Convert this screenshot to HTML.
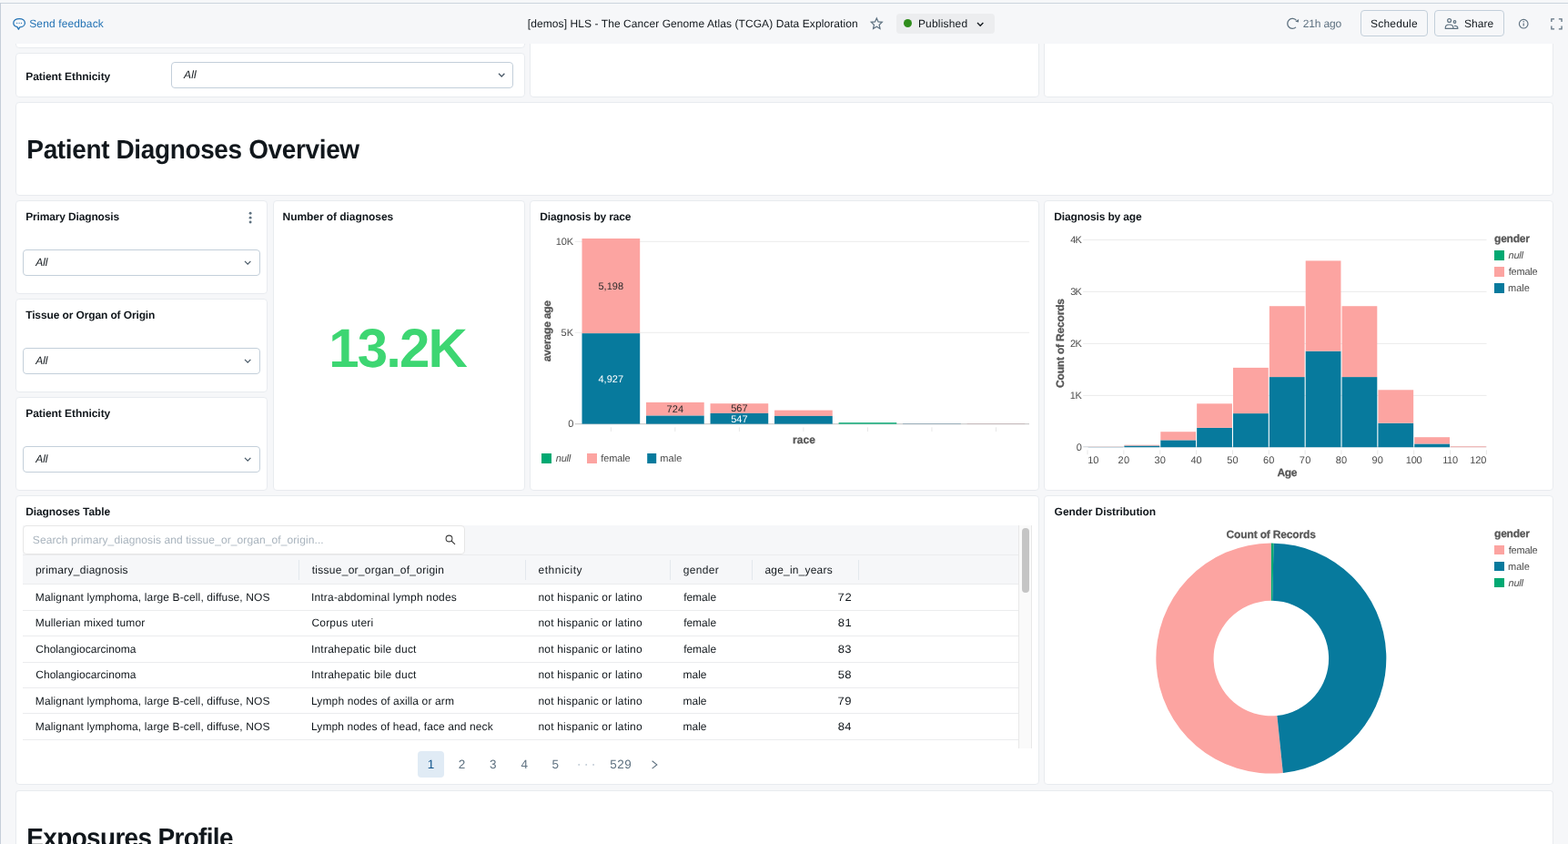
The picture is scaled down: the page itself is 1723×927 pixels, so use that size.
<!DOCTYPE html>
<html lang="en"><head><meta charset="utf-8"><title>[demos] HLS - The Cancer Genome Atlas (TCGA) Data Exploration</title>
<style>
*{box-sizing:border-box;margin:0;padding:0}
html,body{width:1723px;height:927px;overflow:hidden}
body{background:#f6f7f9;font-family:"Liberation Sans",sans-serif;color:#11171c;font-size:12px;position:relative;text-rendering:geometricPrecision}
#app{position:absolute;left:0;top:0;width:1723px;height:927px;overflow:hidden;will-change:transform}
.a{position:absolute}
.card{position:absolute;background:#fff;border:1px solid #e8ebef;border-radius:4px}
.t{position:absolute;white-space:pre;line-height:1}
.sel{position:absolute;background:#fff;border:1px solid #c3cfda;border-radius:4px}
.btn{position:absolute;border:1px solid #c3cfda;border-radius:4px;background:#f6f7f9}
.hl{position:absolute;height:1px;background:#ebecee}
svg{position:absolute;overflow:visible}
svg text{font-family:"Liberation Sans",sans-serif;white-space:pre}
</style></head>
<body>
<div id="app">
<div class="a" style="left:0;top:3px;width:1723px;height:1px;background:#ccd4dd"></div>
<div class="a" style="left:0;top:3px;width:1px;height:924px;background:#c5ced9"></div>
<div class="card" style="left:17px;top:30px;width:560px;height:23px;"></div>
<div class="card" style="left:582px;top:30px;width:560px;height:77px;"></div>
<div class="card" style="left:1147px;top:30px;width:560px;height:77px;"></div>
<div class="card" style="left:17px;top:58px;width:560px;height:49px;"></div>
<div class="card" style="left:17px;top:112px;width:1690px;height:103px;"></div>
<div class="card" style="left:17px;top:220px;width:277px;height:103px;"></div>
<div class="card" style="left:17px;top:328px;width:277px;height:103px;"></div>
<div class="card" style="left:17px;top:436px;width:277px;height:103px;"></div>
<div class="card" style="left:300px;top:220px;width:277px;height:319px;"></div>
<div class="card" style="left:582px;top:220px;width:560px;height:319px;"></div>
<div class="card" style="left:1147px;top:220px;width:560px;height:319px;"></div>
<div class="card" style="left:17px;top:544px;width:1125px;height:318px;"></div>
<div class="card" style="left:1147px;top:544px;width:560px;height:318px;"></div>
<div class="card" style="left:17px;top:868px;width:1690px;height:59px;border-bottom:0;border-radius:4px 4px 0 0"></div>
<div class="a" style="left:1px;top:4px;width:1722px;height:44px;background:#f6f7f9"></div>
<svg style="left:13px;top:19px" width="16" height="15" viewBox="0 0 16 15"><path d="M8.200 1.500C11.700 1.500 14.400 3.500 14.400 6.200C14.400 8.900 11.900 10.900 8.700 10.900L7.400 13.300L6 10.600C3.500 10 1.800 8.300 1.800 6.200C1.800 3.500 4.700 1.500 8.200 1.500Z" fill="none" stroke="#2272b4" stroke-width="1.250" stroke-linejoin="round"/><circle cx="5.700" cy="6.300" r=".65" fill="#2272b4"/><circle cx="8.100" cy="6.300" r=".65" fill="#2272b4"/><circle cx="10.500" cy="6.300" r=".65" fill="#2272b4"/></svg>
<div class="t" style="left:32.26px;top:20px;color:#2272b4;letter-spacing:0.12px;">Send feedback</div>
<div class="t" style="left:579.84px;top:20px;letter-spacing:0.08px;">[demos] HLS - The Cancer Genome Atlas (TCGA) Data Exploration</div>
<svg style="left:955px;top:18px" width="16" height="16" viewBox="0 0 16 16"><path d="M8.300 2l1.750 3.900 4.250.45-3.150 2.900.85 4.200L8.300 11.300l-3.700 2.150.85-4.200L2.300 6.350l4.250-.45z" fill="none" stroke="#5f7281" stroke-width="1.250" stroke-linejoin="miter"/></svg>
<div class="a" style="left:985px;top:15px;width:108px;height:22px;background:#ecedef;border-radius:4px"></div>
<div class="a" style="left:993px;top:21px;width:9px;height:9px;border-radius:50%;background:#2f8d1c"></div>
<div class="t" style="left:1008.92px;top:20px;letter-spacing:0.18px;">Published</div>
<svg style="left:0;top:0" width="1" height="1"><path d="M1074.00 24.95L1077.20 28.25L1080.40 24.95" fill="none" stroke="#11171c" stroke-width="1.3"/></svg>
<svg style="left:0;top:0" width="1" height="1"><path d="M1424.500 22.400A5.500 5.500 0 1 0 1424 29.900" fill="none" stroke="#5f7281" stroke-width="1.300"/><path d="M1427.100 20.900L1426.900 24.400L1423.300 23.700Z" fill="#5f7281"/></svg>
<div class="t" style="left:1431.8px;top:20px;color:#5f7281;letter-spacing:-0.18px;">21h ago</div>
<div class="btn" style="left:1495px;top:11px;width:74px;height:29px"></div>
<div class="t" style="left:1505.96px;top:20px;letter-spacing:0.23px;">Schedule</div>
<div class="btn" style="left:1576px;top:11px;width:77px;height:29px"></div>
<svg style="left:0;top:0" width="1" height="1"><g fill="none" stroke="#5f7281" stroke-width="1.200" stroke-linejoin="round"><circle cx="1592.600" cy="22.500" r="1.950"/><path d="M1588.300 31.400v-1.100c0-2.100 1.900-3.300 4.300-3.300s4.300 1.200 4.300 3.300v1.100z"/><circle cx="1598.500" cy="24" r="1.300"/><path d="M1598 28.500h1.300c1.500 0 2.500.8 2.500 2.100v.8h-4.900"/></g></svg>
<div class="t" style="left:1609.06px;top:20px;letter-spacing:0.04px;">Share</div>
<svg style="left:1667px;top:19px" width="14" height="14" viewBox="0 0 14 14"><circle cx="7.200" cy="7.200" r="4.800" fill="none" stroke="#5f7281" stroke-width="1.150"/><path d="M7.200 6.500v3.100" stroke="#5f7281" stroke-width="1.250"/><circle cx="7.200" cy="4.800" r=".75" fill="#5f7281"/></svg>
<svg style="left:0;top:0" width="1" height="1"><path d="M1704.85 24.00V20.80H1708.05M1712.85 20.80H1716.05V24.00M1716.05 28.60V31.80H1712.85M1708.05 31.80H1704.85V28.60" fill="none" stroke="#5f7281" stroke-width="1.300"/></svg>
<div class="t" style="left:28.2px;top:78px;font-weight:bold;letter-spacing:-0.06px;">Patient Ethnicity</div>
<div class="sel" style="left:188px;top:68px;width:376px;height:29px"></div>
<div class="t" style="left:202.09px;top:76.4px;font-style:italic;letter-spacing:0.1px;">All</div>
<svg style="left:0;top:0" width="1" height="1"><path d="M548.00 80.75L551.20 84.05L554.40 80.75" fill="none" stroke="#4a5a68" stroke-width="1.25"/></svg>
<div class="t" style="left:29.33px;top:151.1px;font-size:28px;font-weight:bold;letter-spacing:-0.37px;transform:scaleY(1.045);transform-origin:0 23px;">Patient Diagnoses Overview</div>
<div class="t" style="left:29.33px;top:907.1px;font-size:28px;font-weight:bold;letter-spacing:-0.68px;transform:scaleY(1.045);transform-origin:0 23px;">Exposures Profile</div>
<div class="t" style="left:28.2px;top:232.2px;font-weight:bold;letter-spacing:-0.15px;">Primary Diagnosis</div>
<div class="sel" style="left:25px;top:274px;width:261px;height:29px"></div>
<div class="t" style="left:39.19px;top:282px;font-style:italic;">All</div>
<svg style="left:0;top:0" width="1" height="1"><path d="M269.00 286.85L272.20 290.15L275.40 286.85" fill="none" stroke="#4a5a68" stroke-width="1.25"/></svg>
<div class="t" style="left:28.17px;top:340.2px;font-weight:bold;letter-spacing:-0.12px;">Tissue or Organ of Origin</div>
<div class="sel" style="left:25px;top:382px;width:261px;height:29px"></div>
<div class="t" style="left:39.19px;top:390px;font-style:italic;">All</div>
<svg style="left:0;top:0" width="1" height="1"><path d="M269.00 394.85L272.20 398.15L275.40 394.85" fill="none" stroke="#4a5a68" stroke-width="1.25"/></svg>
<div class="t" style="left:28.2px;top:448.2px;font-weight:bold;letter-spacing:-0.06px;">Patient Ethnicity</div>
<div class="sel" style="left:25px;top:490px;width:261px;height:29px"></div>
<div class="t" style="left:39.19px;top:498px;font-style:italic;">All</div>
<svg style="left:0;top:0" width="1" height="1"><path d="M269.00 502.85L272.20 506.15L275.40 502.85" fill="none" stroke="#4a5a68" stroke-width="1.25"/></svg>
<svg style="left:0;top:0" width="1" height="1"><g fill="#5f7281"><circle cx="275.100" cy="234.300" r="1.450"/><circle cx="275.100" cy="239.150" r="1.450"/><circle cx="275.100" cy="244" r="1.450"/></g></svg>
<div class="t" style="left:310.6px;top:232.2px;font-weight:bold;letter-spacing:-0.06px;">Number of diagnoses</div>
<div class="t" style="left:361.22px;top:353.3px;font-size:60px;color:#3dd672;font-weight:bold;letter-spacing:-1.87px;">13.2K</div>
<div class="t" style="left:593.3px;top:232.2px;font-weight:bold;letter-spacing:-0.16px;">Diagnosis by race</div>
<div class="t" style="left:1158.3px;top:232.2px;font-weight:bold;letter-spacing:-0.16px;">Diagnosis by age</div>
<div class="t" style="left:28.2px;top:556.2px;font-weight:bold;letter-spacing:-0.11px;">Diagnoses Table</div>
<div class="t" style="left:1158.61px;top:556.2px;font-weight:bold;letter-spacing:-0.06px;">Gender Distribution</div>
<svg style="left:0;top:0" width="1723" height="927" viewBox="0 0 1723 927">
<rect x="631.70" y="264.80" width="499.30" height="1.00" fill="#ebebeb"/>
<text x="610.66" y="269.2" font-size="11" fill="#4c4c4c" letter-spacing="-0.11">10K</text>
<rect x="631.70" y="364.80" width="499.30" height="1.00" fill="#ebebeb"/>
<text x="616.46" y="369.2" font-size="11" fill="#4c4c4c" letter-spacing="0.1">5K</text>
<text x="624.17" y="469.2" font-size="11" fill="#4c4c4c">0</text>
<rect x="631.70" y="465.20" width="499.30" height="1.00" fill="#c2c2c2"/>
<rect x="639.50" y="261.95" width="63.70" height="104.20" fill="#fca4a1"/>
<rect x="639.50" y="366.15" width="63.70" height="99.45" fill="#077a9d"/>
<rect x="670.85" y="469.30" width="1.00" height="4.70" fill="#e8e8e8"/>
<rect x="710.02" y="441.90" width="63.70" height="14.70" fill="#fca4a1"/>
<rect x="710.02" y="456.60" width="63.70" height="9.00" fill="#077a9d"/>
<rect x="741.37" y="469.30" width="1.00" height="4.70" fill="#e8e8e8"/>
<rect x="780.54" y="443.20" width="63.70" height="10.70" fill="#fca4a1"/>
<rect x="780.54" y="453.90" width="63.70" height="11.70" fill="#077a9d"/>
<rect x="811.89" y="469.30" width="1.00" height="4.70" fill="#e8e8e8"/>
<rect x="851.06" y="450.60" width="63.70" height="6.30" fill="#fca4a1"/>
<rect x="851.06" y="456.90" width="63.70" height="8.70" fill="#077a9d"/>
<rect x="882.41" y="469.30" width="1.00" height="4.70" fill="#e8e8e8"/>
<rect x="921.58" y="464.20" width="63.70" height="1.40" fill="#00a972"/>
<rect x="952.93" y="469.30" width="1.00" height="4.70" fill="#e8e8e8"/>
<rect x="992.10" y="465.10" width="63.70" height="0.20" fill="#fca4a1"/>
<rect x="992.10" y="465.30" width="63.70" height="0.30" fill="#077a9d"/>
<rect x="1023.45" y="469.30" width="1.00" height="4.70" fill="#e8e8e8"/>
<rect x="1062.62" y="465.20" width="63.70" height="0.30" fill="#fca4a1"/>
<rect x="1062.62" y="465.50" width="63.70" height="0.10" fill="#077a9d"/>
<rect x="1093.97" y="469.30" width="1.00" height="4.70" fill="#e8e8e8"/>
<text x="657.46" y="318.2" font-size="11" fill="#2b2b2b" letter-spacing="0.02">5,198</text>
<text x="657.45" y="420" font-size="11" fill="#ffffff" letter-spacing="0.04">4,927</text>
<text x="732.54" y="452.9" font-size="11" fill="#2b2b2b" letter-spacing="0.06">724</text>
<text x="803.16" y="452.3" font-size="11" fill="#2b2b2b" letter-spacing="0.02">567</text>
<text x="803.16" y="464.3" font-size="11" fill="#ffffff" letter-spacing="0.02">547</text>
<text x="871.11" y="486.8" font-size="12" fill="#565656" font-weight="bold" stroke="#565656" stroke-width="0.25">race</text>
<text x="-397.35" y="605.3" font-size="12" fill="#565656" font-weight="bold" letter-spacing="-0.2" stroke="#565656" stroke-width="0.3" transform="rotate(-90 0 0)">average age</text>
<rect x="595.00" y="498.00" width="11.00" height="11.00" fill="#00a972"/>
<text x="610.82" y="507.4" font-size="11" fill="#4c4c4c" font-style="italic" letter-spacing="-0.23">null</text>
<rect x="645.00" y="498.00" width="11.00" height="11.00" fill="#fca4a1"/>
<text x="660.34" y="507.4" font-size="11" fill="#4c4c4c" letter-spacing="-0.14">female</text>
<rect x="711.20" y="498.00" width="10.00" height="11.00" fill="#077a9d"/>
<text x="725.37" y="507.4" font-size="11" fill="#4c4c4c" letter-spacing="0.06">male</text>
<text x="1182.77" y="495.2" font-size="11" fill="#4c4c4c">0</text>
<rect x="1190.20" y="433.90" width="443.30" height="1.00" fill="#ebebeb"/>
<text x="1175.76" y="438.2" font-size="11" fill="#4c4c4c" letter-spacing="-0.31">1K</text>
<rect x="1190.20" y="376.90" width="443.30" height="1.00" fill="#ebebeb"/>
<text x="1176.05" y="381.2" font-size="11" fill="#4c4c4c" letter-spacing="-0.59">2K</text>
<rect x="1190.20" y="319.90" width="443.30" height="1.00" fill="#ebebeb"/>
<text x="1176.18" y="324.2" font-size="11" fill="#4c4c4c" letter-spacing="-0.73">3K</text>
<rect x="1190.20" y="262.90" width="443.30" height="1.00" fill="#ebebeb"/>
<text x="1176.35" y="267.2" font-size="11" fill="#4c4c4c" letter-spacing="-0.89">4K</text>
<rect x="1190.20" y="490.30" width="443.30" height="1.00" fill="#cdd2d6"/>
<rect x="1195.60" y="491.03" width="38.75" height="0.17" fill="#077a9d"/>
<rect x="1195.60" y="490.86" width="38.75" height="0.17" fill="#fca4a1"/>
<rect x="1235.45" y="489.49" width="38.75" height="1.71" fill="#077a9d"/>
<rect x="1235.45" y="488.69" width="38.75" height="0.80" fill="#fca4a1"/>
<rect x="1275.30" y="483.39" width="38.75" height="7.81" fill="#077a9d"/>
<rect x="1275.30" y="474.21" width="38.75" height="9.18" fill="#fca4a1"/>
<rect x="1315.15" y="469.82" width="38.75" height="21.38" fill="#077a9d"/>
<rect x="1315.15" y="443.32" width="38.75" height="26.51" fill="#fca4a1"/>
<rect x="1355.00" y="454.09" width="38.75" height="37.11" fill="#077a9d"/>
<rect x="1355.00" y="403.88" width="38.75" height="50.22" fill="#fca4a1"/>
<rect x="1394.85" y="414.08" width="38.75" height="77.12" fill="#077a9d"/>
<rect x="1394.85" y="336.22" width="38.75" height="77.86" fill="#fca4a1"/>
<rect x="1434.70" y="385.58" width="38.75" height="105.62" fill="#077a9d"/>
<rect x="1434.70" y="286.40" width="38.75" height="99.18" fill="#fca4a1"/>
<rect x="1474.55" y="414.08" width="38.75" height="77.12" fill="#077a9d"/>
<rect x="1474.55" y="336.22" width="38.75" height="77.86" fill="#fca4a1"/>
<rect x="1514.40" y="464.64" width="38.75" height="26.56" fill="#077a9d"/>
<rect x="1514.40" y="428.27" width="38.75" height="36.37" fill="#fca4a1"/>
<rect x="1554.25" y="487.44" width="38.75" height="3.76" fill="#077a9d"/>
<rect x="1554.25" y="480.20" width="38.75" height="7.24" fill="#fca4a1"/>
<rect x="1594.10" y="490.40" width="38.75" height="0.80" fill="#fca4a1"/>
<rect x="1194.50" y="494.30" width="1.00" height="5.00" fill="#e8e8e8"/>
<text x="1195.36" y="508.8" font-size="11" fill="#4c4c4c" letter-spacing="-0.28">10</text>
<rect x="1234.35" y="494.30" width="1.00" height="5.00" fill="#e8e8e8"/>
<text x="1228.55" y="508.8" font-size="11" fill="#4c4c4c" letter-spacing="0.23">20</text>
<rect x="1274.20" y="494.30" width="1.00" height="5.00" fill="#e8e8e8"/>
<text x="1268.53" y="508.8" font-size="11" fill="#4c4c4c" letter-spacing="0.1">30</text>
<rect x="1314.05" y="494.30" width="1.00" height="5.00" fill="#e8e8e8"/>
<text x="1308.55" y="508.8" font-size="11" fill="#4c4c4c" letter-spacing="-0.07">40</text>
<rect x="1353.90" y="494.30" width="1.00" height="5.00" fill="#e8e8e8"/>
<text x="1348.21" y="508.8" font-size="11" fill="#4c4c4c" letter-spacing="0.12">50</text>
<rect x="1393.75" y="494.30" width="1.00" height="5.00" fill="#e8e8e8"/>
<text x="1387.94" y="508.8" font-size="11" fill="#4c4c4c" letter-spacing="0.24">60</text>
<rect x="1433.60" y="494.30" width="1.00" height="5.00" fill="#e8e8e8"/>
<text x="1427.79" y="508.8" font-size="11" fill="#4c4c4c" letter-spacing="0.24">70</text>
<rect x="1473.45" y="494.30" width="1.00" height="5.00" fill="#e8e8e8"/>
<text x="1467.72" y="508.8" font-size="11" fill="#4c4c4c" letter-spacing="0.16">80</text>
<rect x="1513.30" y="494.30" width="1.00" height="5.00" fill="#e8e8e8"/>
<text x="1507.53" y="508.8" font-size="11" fill="#4c4c4c" letter-spacing="0.2">90</text>
<rect x="1553.15" y="494.30" width="1.00" height="5.00" fill="#e8e8e8"/>
<text x="1544.86" y="508.8" font-size="11" fill="#4c4c4c" letter-spacing="-0.25">100</text>
<rect x="1593.00" y="494.30" width="1.00" height="5.00" fill="#e8e8e8"/>
<text x="1585.16" y="508.8" font-size="11" fill="#4c4c4c" letter-spacing="-0.34">110</text>
<rect x="1632.85" y="494.30" width="1.00" height="5.00" fill="#e8e8e8"/>
<text x="1615.16" y="508.8" font-size="11" fill="#4c4c4c" letter-spacing="-0.05">120</text>
<text x="1403.6" y="522.7" font-size="12" fill="#565656" font-weight="bold" stroke="#565656" stroke-width="0.25" letter-spacing="-0.48">Age</text>
<text x="-425.99" y="1169.3" font-size="12" fill="#565656" font-weight="bold" letter-spacing="-0.18" stroke="#565656" stroke-width="0.3" transform="rotate(-90 0 0)">Count of Records</text>
<text x="1642.11" y="266" font-size="12" fill="#565656" font-weight="bold" stroke="#565656" stroke-width="0.25" letter-spacing="-0.25">gender</text>
<rect x="1642.00" y="275.00" width="11.00" height="11.00" fill="#00a972"/>
<text x="1657.62" y="283.9" font-size="11" fill="#4c4c4c" font-style="italic" letter-spacing="-0.26">null</text>
<rect x="1642.00" y="293.00" width="11.00" height="11.00" fill="#fca4a1"/>
<text x="1657.64" y="301.9" font-size="11" fill="#4c4c4c" letter-spacing="-0.18">female</text>
<rect x="1642.00" y="311.00" width="11.00" height="11.00" fill="#077a9d"/>
<text x="1657.07" y="319.9" font-size="11" fill="#4c4c4c" letter-spacing="-0.01">male</text>
<path d="M1409.85 848.93A126.5 126.5 0 1 1 1396.85 596.60L1396.85 659.85A63.25 63.25 0 1 0 1403.35 786.01Z" fill="#fca4a1"/>
<path d="M1399.50 596.63A126.5 126.5 0 0 1 1409.85 848.93L1403.35 786.01A63.25 63.25 0 0 0 1398.17 659.86Z" fill="#077a9d"/>
<path d="M1396.85 596.60A126.5 126.5 0 0 1 1399.61 596.63L1398.23 659.87A63.25 63.25 0 0 0 1396.85 659.85Z" fill="#00a972"/>
<text x="1347.61" y="590.8" font-size="12" fill="#565656" font-weight="bold" stroke="#565656" stroke-width="0.25" letter-spacing="-0.16">Count of Records</text>
<text x="1642.11" y="590" font-size="12" fill="#565656" font-weight="bold" stroke="#565656" stroke-width="0.25" letter-spacing="-0.25">gender</text>
<rect x="1642.00" y="599.00" width="11.00" height="10.00" fill="#fca4a1"/>
<text x="1657.64" y="607.9" font-size="11" fill="#4c4c4c" letter-spacing="-0.18">female</text>
<rect x="1642.00" y="617.00" width="11.00" height="10.00" fill="#077a9d"/>
<text x="1657.07" y="625.9" font-size="11" fill="#4c4c4c" letter-spacing="-0.01">male</text>
<rect x="1642.00" y="635.00" width="11.00" height="10.00" fill="#00a972"/>
<text x="1657.62" y="643.9" font-size="11" fill="#4c4c4c" font-style="italic" letter-spacing="-0.26">null</text>
</svg>
<div class="a" style="left:25px;top:577px;width:1095px;height:65px;background:#f6f7f9"></div>
<div class="a" style="left:25px;top:577px;width:486px;height:32px;background:#fff;border:1px solid #e6e6e6;border-radius:4px"></div>
<div class="t" style="left:35.86px;top:586.9px;color:#a9b4be;letter-spacing:0.1px;">Search primary_diagnosis and tissue_or_organ_of_origin...</div>
<svg style="left:0;top:0" width="1" height="1"><circle cx="493.500" cy="591.500" r="3.400" fill="none" stroke="#3c3c3c" stroke-width="1.050"/><path d="M496 594L500 597.900" stroke="#3c3c3c" stroke-width="1.150"/></svg>
<div class="hl" style="left:25px;top:609px;width:1095px;background:#ebecee"></div>
<div class="t" style="left:38.93px;top:620px;letter-spacing:0.27px;">primary_diagnosis</div>
<div class="t" style="left:342.72px;top:620px;letter-spacing:0.27px;">tissue_or_organ_of_origin</div>
<div class="t" style="left:591.59px;top:620px;letter-spacing:0.49px;">ethnicity</div>
<div class="t" style="left:750.7px;top:620px;letter-spacing:0.35px;">gender</div>
<div class="t" style="left:840.49px;top:620px;letter-spacing:0.19px;">age_in_years</div>
<div class="a" style="left:328px;top:615px;width:1px;height:22px;background:#e3e8ed"></div>
<div class="a" style="left:577px;top:615px;width:1px;height:22px;background:#e3e8ed"></div>
<div class="a" style="left:736px;top:615px;width:1px;height:22px;background:#e3e8ed"></div>
<div class="a" style="left:826px;top:615px;width:1px;height:22px;background:#e3e8ed"></div>
<div class="a" style="left:943px;top:615px;width:1px;height:22px;background:#e3e8ed"></div>
<div class="hl" style="left:25px;top:641px;width:1095px"></div>
<div class="hl" style="left:25px;top:670px;width:1095px"></div>
<div class="hl" style="left:25px;top:698px;width:1095px"></div>
<div class="hl" style="left:25px;top:727px;width:1095px"></div>
<div class="hl" style="left:25px;top:755px;width:1095px"></div>
<div class="hl" style="left:25px;top:783px;width:1095px"></div>
<div class="hl" style="left:25px;top:812px;width:1095px"></div>
<div class="t" style="left:38.82px;top:650px;letter-spacing:0.13px;">Malignant lymphoma, large B-cell, diffuse, NOS</div>
<div class="t" style="left:341.89px;top:650px;letter-spacing:0.2px;">Intra-abdominal lymph nodes</div>
<div class="t" style="left:591.4px;top:650px;letter-spacing:0.2px;">not hispanic or latino</div>
<div class="t" style="left:751.13px;top:650px;letter-spacing:-0.01px;">female</div>
<div class="t" style="left:920.53px;top:649px;font-size:13px;letter-spacing:0.65px;transform:scaleY(0.930);transform-origin:0 11px;">72</div>
<div class="t" style="left:38.82px;top:678px;letter-spacing:0.12px;">Mullerian mixed tumor</div>
<div class="t" style="left:342.39px;top:678px;letter-spacing:0.22px;">Corpus uteri</div>
<div class="t" style="left:591.4px;top:678px;letter-spacing:0.2px;">not hispanic or latino</div>
<div class="t" style="left:751.13px;top:678px;letter-spacing:-0.01px;">female</div>
<div class="t" style="left:920.64px;top:677px;font-size:13px;letter-spacing:0.53px;transform:scaleY(0.930);transform-origin:0 11px;">81</div>
<div class="t" style="left:39.19px;top:707px;letter-spacing:0.05px;">Cholangiocarcinoma</div>
<div class="t" style="left:341.89px;top:707px;letter-spacing:0.23px;">Intrahepatic bile duct</div>
<div class="t" style="left:591.4px;top:707px;letter-spacing:0.2px;">not hispanic or latino</div>
<div class="t" style="left:751.13px;top:707px;letter-spacing:-0.01px;">female</div>
<div class="t" style="left:920.64px;top:706px;font-size:13px;letter-spacing:0.47px;transform:scaleY(0.930);transform-origin:0 11px;">83</div>
<div class="t" style="left:39.19px;top:735px;letter-spacing:0.05px;">Cholangiocarcinoma</div>
<div class="t" style="left:341.89px;top:735px;letter-spacing:0.23px;">Intrahepatic bile duct</div>
<div class="t" style="left:591.4px;top:735px;letter-spacing:0.2px;">not hispanic or latino</div>
<div class="t" style="left:750.5px;top:735px;letter-spacing:0px;">male</div>
<div class="t" style="left:920.68px;top:734px;font-size:13px;letter-spacing:0.42px;transform:scaleY(0.930);transform-origin:0 11px;">58</div>
<div class="t" style="left:38.82px;top:764px;letter-spacing:0.13px;">Malignant lymphoma, large B-cell, diffuse, NOS</div>
<div class="t" style="left:342.02px;top:764px;letter-spacing:0.12px;">Lymph nodes of axilla or arm</div>
<div class="t" style="left:591.4px;top:764px;letter-spacing:0.2px;">not hispanic or latino</div>
<div class="t" style="left:750.5px;top:764px;letter-spacing:0px;">male</div>
<div class="t" style="left:920.53px;top:763px;font-size:13px;letter-spacing:0.61px;transform:scaleY(0.930);transform-origin:0 11px;">79</div>
<div class="t" style="left:38.82px;top:792px;letter-spacing:0.13px;">Malignant lymphoma, large B-cell, diffuse, NOS</div>
<div class="t" style="left:342.02px;top:792px;letter-spacing:0.1px;">Lymph nodes of head, face and neck</div>
<div class="t" style="left:591.4px;top:792px;letter-spacing:0.2px;">not hispanic or latino</div>
<div class="t" style="left:750.5px;top:792px;letter-spacing:0px;">male</div>
<div class="t" style="left:920.64px;top:791px;font-size:13px;letter-spacing:0.28px;transform:scaleY(0.930);transform-origin:0 11px;">84</div>
<div class="a" style="left:1119px;top:577px;width:15px;height:245px;background:#fafafa;border-left:1px solid #e8e8e8;border-right:1px solid #e8e8e8"></div>
<div class="a" style="left:1123px;top:580px;width:8px;height:71px;background:#c5c5c5;border-radius:4px"></div>
<div class="a" style="left:459px;top:825px;width:29px;height:29px;background:#e0ebf5;border-radius:4px"></div>
<div class="t" style="left:469.87px;top:833.3px;font-size:13.5px;color:#0e538b;">1</div>
<div class="t" style="left:503.82px;top:833.3px;font-size:13.5px;color:#5f7281;">2</div>
<div class="t" style="left:538.09px;top:833.3px;font-size:13.5px;color:#5f7281;">3</div>
<div class="t" style="left:572.49px;top:833.3px;font-size:13.5px;color:#5f7281;">4</div>
<div class="t" style="left:606.56px;top:833.3px;font-size:13.5px;color:#5f7281;">5</div>
<div class="t" style="left:670.26px;top:833.3px;font-size:13.5px;color:#5f7281;letter-spacing:0.47px;">529</div>
<svg style="left:0;top:0" width="1" height="1"><g fill="#bcc8d3"><circle cx="636.200" cy="839.900" r="0.950"/><circle cx="644.200" cy="839.900" r="0.950"/><circle cx="652.100" cy="839.900" r="0.950"/></g></svg>
<svg style="left:0;top:0" width="1" height="1"><path d="M716.600 835.700L721.800 839.900L716.600 844.100" fill="none" stroke="#5f7281" stroke-width="1.150"/></svg>
</div>
</body></html>
